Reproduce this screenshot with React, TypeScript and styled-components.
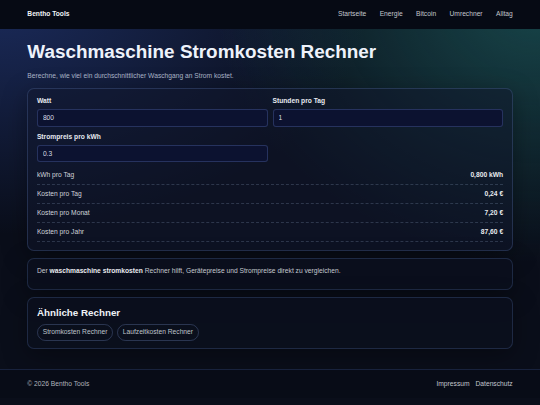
import * as React from 'react'
import styled, { createGlobalStyle } from 'styled-components'

const GlobalStyle = createGlobalStyle`
  * {
    box-sizing: border-box;
  }

  html {
    background: #0a0e1a;
  }

  body {
    margin: 0;
    font-family: 'Liberation Sans', Arial, sans-serif;
    font-size: 6.7px;
    line-height: 1.5;
    color: #d5dbe7;
    background-color: #0a0e1a;
    background-image:
      radial-gradient(100% 110% at 100% 0%, rgba(30, 98, 98, 0.66) 0%, rgba(30, 98, 98, 0) 60%),
      radial-gradient(110% 95% at 0% 0%, rgba(32, 52, 112, 0.75) 0%, rgba(32, 52, 112, 0) 62%);
  }
`

const Wrap = styled.div`
  width: 100%;
  padding: 0 27.3px;
`

const Header = styled.header`
  background: #060a14;
`

const HeaderInner = styled(Wrap)`
  height: 29px;
  display: flex;
  align-items: center;
  justify-content: space-between;
`

const Logo = styled.a`
  font-weight: bold;
  color: #f1f3f6;
  text-decoration: none;
`

const Nav = styled.nav`
  display: flex;
  margin-right: -6.7px;
`

const NavLink = styled.a`
  padding: 0 6.7px;
  color: #c2c6cd;
  text-decoration: none;
`

const Main = styled.main`
  padding: 12px 0 20px;
`

const Title = styled.h1`
  margin: 0;
  font-size: 18.9px;
  line-height: 1.2;
  font-weight: bold;
  color: #eef2fb;
`

const Lead = styled.p`
  margin: 7px 0;
  line-height: 10px;
  color: #a9b3c6;
`

const Card = styled.section<{ $tone?: 'glass' | 'dark' }>`
  border-radius: 7px;
  border: 1px solid ${p => (p.$tone === 'glass' ? 'rgba(96, 126, 186, 0.28)' : 'rgba(70, 92, 140, 0.35)')};
  background: ${p => (p.$tone === 'glass' ? 'rgba(15, 22, 44, 0.5)' : 'rgba(11, 15, 29, 0.85)')};
  box-shadow: 0 6px 24px rgba(0, 0, 0, 0.35);
  padding: 8.6px 8.6px 7.5px;

  & + & {
    margin-top: 7px;
  }
`

const Fields = styled.div`
  display: grid;
  grid-template-columns: 1fr 1fr;
  column-gap: 5px;
  row-gap: 6.6px;
`

const Field = styled.label`
  display: flex;
  flex-direction: column;
  gap: 3.6px;
`

const FieldLabel = styled.span`
  font-weight: bold;
  line-height: 8.4px;
  color: #e6e9ef;
`

const Input = styled.input`
  height: 17.3px;
  padding: 0 5px;
  border-radius: 3px;
  border: 1px solid rgba(70, 92, 150, 0.45);
  background: #0c1230;
  color: #d8dce4;
  font-family: inherit;
  font-size: 6.7px;
  outline: none;
`

const Results = styled.div`
  margin-top: 3px;
`

const ResultRow = styled.div`
  display: flex;
  justify-content: space-between;
  align-items: center;
  padding: 5.1px 0;
  line-height: 8px;
  border-bottom: 1px dashed rgba(120, 138, 170, 0.3);
`

const ResultLabel = styled.span`
  color: #cfd3da;
`

const ResultValue = styled.strong`
  color: #e9ebef;
`

const Text = styled.p`
  margin: 0 0 6.5px;
  line-height: 8px;
  color: #c4c8cf;

  strong {
    color: #e9ebef;
  }
`

const SubTitle = styled.h2`
  margin: 0 0 5px;
  font-size: 9.8px;
  line-height: 12px;
  color: #eef1f6;
`

const Chips = styled.div`
  display: flex;
  gap: 3.8px;
`

const Chip = styled.a`
  display: inline-flex;
  align-items: center;
  height: 17px;
  padding: 0 4.8px;
  border-radius: 999px;
  border: 1px solid rgba(90, 110, 160, 0.4);
  color: #bfc3ca;
  text-decoration: none;
`

const Footer = styled.footer`
  background: #080c17;
  border-top: 1px solid #18223d;
`

const FooterInner = styled(Wrap)`
  height: 28px;
  display: flex;
  align-items: center;
  justify-content: space-between;
  color: #b0b4bb;
`

const FooterLinks = styled.div`
  display: flex;
  gap: 6px;
`

const FooterLink = styled.a`
  color: #c2c6cd;
  text-decoration: none;
`

const nav = ['Startseite', 'Energie', 'Bitcoin', 'Umrechner', 'Alltag']

export default function App() {
  const [watt, setWatt] = React.useState('800')
  const [hours, setHours] = React.useState('1')
  const [price, setPrice] = React.useState('0.3')

  const kwh = (parseFloat(watt) || 0) * (parseFloat(hours) || 0) / 1000
  const perDay = kwh * (parseFloat(price) || 0)
  const fmt = (n: number, d: number) => n.toFixed(d).replace('.', ',')

  const rows = [
    { label: 'kWh pro Tag', value: `${fmt(kwh, 3)} kWh` },
    { label: 'Kosten pro Tag', value: `${fmt(perDay, 2)} €` },
    { label: 'Kosten pro Monat', value: `${fmt(perDay * 30, 2)} €` },
    { label: 'Kosten pro Jahr', value: `${fmt(perDay * 365, 2)} €` },
  ]

  return (
    <>
      <GlobalStyle />
      <Header>
        <HeaderInner>
          <Logo href="#">Bentho Tools</Logo>
          <Nav>
            {nav.map(item => <NavLink key={item} href="#">{item}</NavLink>)}
          </Nav>
        </HeaderInner>
      </Header>
      <Main>
        <Wrap>
          <Title>Waschmaschine Stromkosten Rechner</Title>
          <Lead>Berechne, wie viel ein durchschnittlicher Waschgang an Strom kostet.</Lead>
          <Card $tone="glass">
            <Fields>
              <Field>
                <FieldLabel>Watt</FieldLabel>
                <Input value={watt} onChange={e => setWatt(e.target.value)} />
              </Field>
              <Field>
                <FieldLabel>Stunden pro Tag</FieldLabel>
                <Input value={hours} onChange={e => setHours(e.target.value)} />
              </Field>
              <Field>
                <FieldLabel>Strompreis pro kWh</FieldLabel>
                <Input value={price} onChange={e => setPrice(e.target.value)} />
              </Field>
            </Fields>
            <Results>
              {rows.map(({ label, value }) => (
                <ResultRow key={label}>
                  <ResultLabel>{label}</ResultLabel>
                  <ResultValue>{value}</ResultValue>
                </ResultRow>
              ))}
            </Results>
          </Card>
          <Card>
            <Text>
              Der <strong>waschmaschine stromkosten</strong> Rechner hilft, Gerätepreise und Strompreise direkt zu vergleichen.
            </Text>
          </Card>
          <Card>
            <SubTitle>Ähnliche Rechner</SubTitle>
            <Chips>
              <Chip href="#">Stromkosten Rechner</Chip>
              <Chip href="#">Laufzeitkosten Rechner</Chip>
            </Chips>
          </Card>
        </Wrap>
      </Main>
      <Footer>
        <FooterInner>
          <span>© 2026 Bentho Tools</span>
          <FooterLinks>
            <FooterLink href="#">Impressum</FooterLink>
            <FooterLink href="#">Datenschutz</FooterLink>
          </FooterLinks>
        </FooterInner>
      </Footer>
    </>
  )
}
